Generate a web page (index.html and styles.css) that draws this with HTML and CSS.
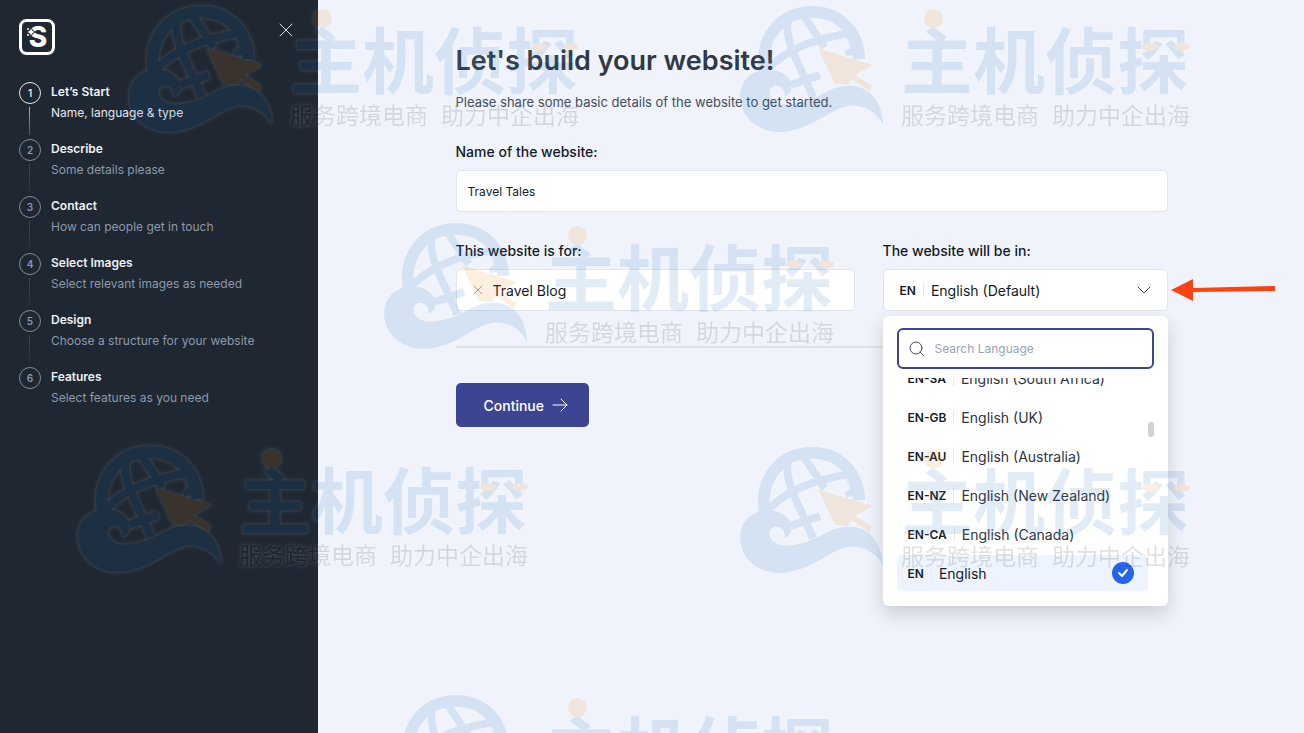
FILE: index.html
```html
<!DOCTYPE html>
<html lang="en">
<head>
  <meta charset="UTF-8">
  <meta name="viewport" content="width=device-width, initial-scale=1.0">
  <title>Let's build your website!</title>
  <link rel="stylesheet" href="styles.css">
</head>
<body>
  <svg class="defs" aria-hidden="true">
    <symbol id="globe" viewBox="0 0 148 130">
      <g fill="none" stroke="#146ebe">
        <path stroke-width="12" stroke-linecap="butt" d="M26 68C20 34 42 7 74 7c28 0 47 20 48 48"/>
        <path stroke-width="8" stroke-linecap="butt" d="M49 16c-2 26 14 46 26 78M65 10l22 33M28 66C46 46 74 34 116 28M53 81l29-10"/>
      </g>
      <path fill="#146ebe" d="M106 28l13 22-10 2-2-4 6-5z"/>
      <path fill="#f0850a" d="M80 44l56 17-18 10 17 11-2 6-19-13-3 6-14-1z"/>
      <path fill="#146ebe" d="M1 91C2 75 14 66 30 65c14 1 25 10 23 20-1 5-4 7-7 8 1-7-3-11-9-11-6 1-8 8-4 13 6 7 15 7 25 5 24-4 34-19 55-18 22 0 34 22 33 40-5-12-17-20-32-20-20 1-40 26-73 27C18 129 0 113 1 91z"/>
    </symbol>
  </svg>

  <div class="layout">
    <aside class="sidebar">
      <div class="sidebar-top">
        <svg class="logo" viewBox="0 0 36 36" role="img" aria-label="Logo">
          <rect x="1.500" y="1.500" width="33" height="33" rx="6" fill="none" stroke="#fff" stroke-width="3"/>
          <text x="19" y="28" text-anchor="middle" class="logo-letter">S</text>
          <path fill="#fff" stroke="#1f2732" d="M12 8l1.500 3.500L17 13l-3.500 1.500L12 18l-1.500-3.500L7 13l3.500-1.500z"/>
          <circle cx="9" cy="10" r="1" fill="#fff"/>
          <circle cx="9" cy="16" r="1" fill="#fff"/>
        </svg>
        <button class="close" aria-label="Close">
          <svg viewBox="0 0 14 14"><path d="M1 1l12 12M13 1L1 13"/></svg>
        </button>
      </div>
      <ol class="steps">
        <li class="step current">
          <span class="num">1</span>
          <div><h2>Let’s Start</h2><p>Name, language &amp; type</p></div>
        </li>
        <li class="step">
          <span class="num">2</span>
          <div><h2>Describe</h2><p>Some details please</p></div>
        </li>
        <li class="step">
          <span class="num">3</span>
          <div><h2>Contact</h2><p>How can people get in touch</p></div>
        </li>
        <li class="step">
          <span class="num">4</span>
          <div><h2>Select Images</h2><p>Select relevant images as needed</p></div>
        </li>
        <li class="step">
          <span class="num">5</span>
          <div><h2>Design</h2><p>Choose a structure for your website</p></div>
        </li>
        <li class="step">
          <span class="num">6</span>
          <div><h2>Features</h2><p>Select features as you need</p></div>
        </li>
      </ol>
    </aside>

    <main class="main">
      <form class="form">
        <h1>Let's build your website!</h1>
        <p class="intro">Please share some basic details of the website to get started.</p>

        <div class="field">
          <label for="name">Name of the website:</label>
          <input class="box name" id="name" type="text" value="Travel Tales">
        </div>

        <div class="row">
          <div class="field">
            <label for="type">This website is for:</label>
            <div class="box type">
              <button type="button" class="clear" aria-label="Clear">
                <svg viewBox="0 0 10 10"><path d="M1 1l8 8M9 1L1 9"/></svg>
              </button>
              <input id="type" type="text" value="Travel Blog">
            </div>
          </div>
          <div class="field language">
            <label for="lang">The website will be in:</label>
            <div class="box lang">
              <span class="code">EN</span>
              <select id="lang">
                <option>English (Default)</option>
              </select>
              <svg class="chevron" viewBox="0 0 14 8"><path d="M1 1l6 6 6-6"/></svg>
            </div>

            <svg class="pointer" viewBox="0 0 104 22" aria-hidden="true">
              <path fill="#fb4314" d="M0 11L22 0v9l82-2v5l-82 1v9z"/>
            </svg>

            <div class="dropdown">
              <div class="search">
                <svg viewBox="0 0 16 16"><circle cx="7" cy="7" r="6"/><path d="M11 11l4 4"/></svg>
                <input type="text" placeholder="Search Language" aria-label="Search Language">
              </div>
              <ul class="options" role="listbox" aria-label="Language">
                <li role="option"><span class="code">EN-SA</span>English (South Africa)</li>
                <li role="option"><span class="code">EN-GB</span>English (UK)</li>
                <li role="option"><span class="code">EN-AU</span>English (Australia)</li>
                <li role="option"><span class="code">EN-NZ</span>English (New Zealand)</li>
                <li role="option"><span class="code">EN-CA</span>English (Canada)</li>
                <li role="option" class="selected" aria-selected="true">
                  <span class="code">EN</span>English
                  <svg class="check" viewBox="0 0 22 22"><circle cx="11" cy="11" r="11"/><path d="M7 11l3 3 5-6"/></svg>
                </li>
              </ul>
              <span class="thumb"></span>
            </div>
          </div>
        </div>

        <hr>
        <button type="button" class="continue">
          Continue
          <svg viewBox="0 0 16 14"><path d="M1 7h14M9 1l6 6-6 6"/></svg>
        </button>
      </form>
    </main>
  </div>

  <div class="watermarks" lang="zh-CN">
    <div class="mark m1"><svg class="globe"><use href="#globe"/></svg><div><b>主机侦探</b><p><span>服务跨境电商</span><span>助力中企出海</span></p></div></div>
    <div class="mark m2"><svg class="globe"><use href="#globe"/></svg><div><b>主机侦探</b><p><span>服务跨境电商</span><span>助力中企出海</span></p></div></div>
    <div class="mark m3"><svg class="globe"><use href="#globe"/></svg><div><b>主机侦探</b><p><span>服务跨境电商</span><span>助力中企出海</span></p></div></div>
    <div class="mark m4"><svg class="globe"><use href="#globe"/></svg><div><b>主机侦探</b><p><span>服务跨境电商</span><span>助力中企出海</span></p></div></div>
    <div class="mark m5"><svg class="globe"><use href="#globe"/></svg><div><b>主机侦探</b><p><span>服务跨境电商</span><span>助力中企出海</span></p></div></div>
    <div class="mark m6"><svg class="globe"><use href="#globe"/></svg><div><b>主机侦探</b></div></div>
  </div>
</body>
</html>
```
FILE: styles.css
```css
* {
  box-sizing: border-box;
}
body {
  margin: 0;
  font-family: Inter, "Liberation Sans", sans-serif;
  font-size: 14px;
  color: #141b28;
  background: #f0f3fb;
}
h1, h2, p, ol, ul {
  margin: 0;
  padding: 0;
}
ol, ul {
  list-style: none;
}
button, input, select {
  font: inherit;
  color: inherit;
  border: 0;
  background: none;
  padding: 0;
}
svg {
  fill: none;
  stroke-linecap: round;
  stroke-linejoin: round;
}
.defs {
  position: absolute;
  width: 0;
  height: 0;
}
.layout {
  display: flex;
  min-height: 100vh;
}

/* sidebar */
.sidebar {
  flex: 0 0 318px;
  background: #1f2732;
  padding: 19px 24px 24px 19px;
}
.sidebar-top {
  display: flex;
  justify-content: space-between;
}
.logo {
  width: 36px;
  height: 36px;
}
.logo-letter {
  font-size: 28px;
  font-weight: 800;
  fill: #fff;
}
.close {
  width: 15px;
  height: 22px;
}
.close svg {
  display: block;
  width: 14px;
  height: 14px;
  stroke: #d5dae3;
}
.steps {
  margin-top: 26px;
}
.step {
  position: relative;
  display: flex;
  gap: 10px;
  height: 57px;
  color: #8d99ab;
}
.step p {
  font-size: 12px;
  line-height: 20px;
}
.step h2 {
  font-size: 12px;
  font-weight: 600;
  line-height: 22px;
  color: #eef1f6;
}
.num {
  width: 22px;
  height: 22px;
  margin-top: 1px;
  border: 1px solid #828b98;
  border-radius: 50%;
  font-size: 10px;
  font-weight: 600;
  line-height: 20px;
  text-align: center;
}
.step:not(:last-child)::before {
  content: "";
  position: absolute;
  left: 10px;
  top: 26px;
  width: 1px;
  height: 28px;
  background: linear-gradient(#3d4653, #262f3b);
}
.step.current {
  color: #e4e8ef;
}
.current .num {
  border-color: #e4e8ef;
}
.step.current::before {
  background: linear-gradient(#aab1bc, #4b5462);
}

/* form */
.main {
  flex: 1;
  padding: 42px 24px 42px 25px;
}
.form {
  max-width: 712px;
  margin: 0 auto;
}
h1 {
  font-size: 27px;
  font-weight: 600;
  line-height: 38px;
  color: #303945;
}
.intro {
  margin-top: 12px;
  font-size: 13px;
  line-height: 21px;
  color: #414d5e;
}
.field {
  display: flex;
  flex-direction: column;
  gap: 8px;
  margin-top: 29px;
}
.field label {
  font-weight: 500;
  line-height: 20px;
}
.box {
  width: 100%;
  height: 42px;
  background: #fff;
  border: 1px solid #e1e5ec;
  border-radius: 5px;
}
.name {
  padding: 0 11px;
  font-size: 12px;
}
.row {
  display: grid;
  grid-template-columns: 7fr 5fr;
  gap: 28px;
}
.type, .lang {
  display: flex;
  align-items: center;
  padding: 0 16px;
}
.type input {
  flex: 1;
  min-width: 0;
}
.clear {
  display: flex;
  width: 20px;
}
.clear svg {
  width: 10px;
  height: 10px;
  stroke: #9ba1aa;
}
.code {
  margin-right: 7px;
  padding-right: 7px;
  border-right: 1px solid #e6e9ef;
  font-size: 12px;
  font-weight: 600;
}
.lang select {
  flex: 1;
  appearance: none;
}
.chevron {
  width: 14px;
  height: 8px;
  stroke: #3a4350;
}
.language {
  position: relative;
}
.pointer {
  position: absolute;
  left: 100%;
  top: 38px;
  width: 104px;
  height: 22px;
  margin-left: 3px;
}
hr {
  height: 2px;
  margin: 35px 0;
  border: 0;
  background: #dfe2e8;
}
.continue {
  display: flex;
  align-items: center;
  gap: 8px;
  height: 44px;
  padding: 0 21px 0 28px;
  border-radius: 5px;
  background: #3d4592;
  color: #fff;
  font-weight: 500;
}
.continue svg {
  width: 16px;
  height: 14px;
  stroke: #fff;
}

/* language list */
.dropdown {
  position: absolute;
  top: 100%;
  left: 0;
  right: 0;
  margin-top: 5px;
  padding: 12px 14px 15px;
  background: #fff;
  border-radius: 6px;
  box-shadow: 0 8px 18px rgba(31, 39, 50, 0.18);
}
.search {
  display: flex;
  align-items: center;
  gap: 10px;
  height: 41px;
  padding: 0 10px;
  border: 2px solid #3d4592;
  border-radius: 6px;
}
.search svg {
  width: 16px;
  height: 16px;
  stroke: #4a5260;
}
.search input {
  flex: 1;
  min-width: 0;
  font-size: 12px;
  outline: none;
}
.search input::placeholder {
  color: #98a3b8;
}
.options {
  display: flex;
  flex-direction: column;
  justify-content: flex-end;
  gap: 3px;
  height: 213px;
  margin: 9px 6px 0 0;
  overflow: hidden;
}
.options li {
  display: flex;
  flex: none;
  align-items: center;
  height: 36px;
  padding: 0 14px 0 11px;
  color: #2d3542;
}
.options .code {
  color: #141b28;
}
.options .selected {
  background: #edf4ff;
  border-radius: 4px;
  color: #141b28;
}
.check {
  width: 22px;
  height: 22px;
  margin-left: auto;
  stroke: #fff;
  stroke-width: 2;
}
.check circle {
  fill: #2563eb;
  stroke: none;
}
.thumb {
  position: absolute;
  right: 14px;
  top: 106px;
  width: 6px;
  height: 15px;
  border-radius: 3px;
  background: #d1d1d1;
}

/* watermarks lie over the whole page */
.watermarks {
  position: absolute;
  inset: 0;
  overflow: hidden;
  pointer-events: none;
}
.mark {
  position: absolute;
  display: flex;
  gap: 15px;
  opacity: 0.12;
  color: #101010;
  font-family: "Noto Sans CJK SC", sans-serif;
  filter: drop-shadow(0 0 1px #fff) drop-shadow(0 0 2px #fff);
}
.globe {
  width: 148px;
  height: 128px;
}
.mark b {
  position: relative;
  display: block;
  margin-top: 14px;
  font-size: 72px;
  line-height: 75px;
  color: #146ebe;
}
.mark b::before,
.mark b::after {
  content: "";
  position: absolute;
  left: 23px;
  top: -10px;
  width: 19px;
  height: 19px;
  border-radius: 50%;
  background: #f0850a;
}
.mark b::after {
  left: 241px;
  top: 24px;
  width: 16px;
  height: 8px;
  box-shadow: 32px 0 #f0850a;
}
.mark p {
  display: flex;
  gap: 13px;
  font-size: 23px;
  line-height: 40px;
}
.m1 { left: 127px; top: 5px; }
.m2 { left: 738px; top: 5px; }
.m3 { left: 382px; top: 222px; }
.m4 { left: 76px; top: 445px; }
.m5 { left: 738px; top: 446px; }
.m6 { left: 382px; top: 694px; }
```
